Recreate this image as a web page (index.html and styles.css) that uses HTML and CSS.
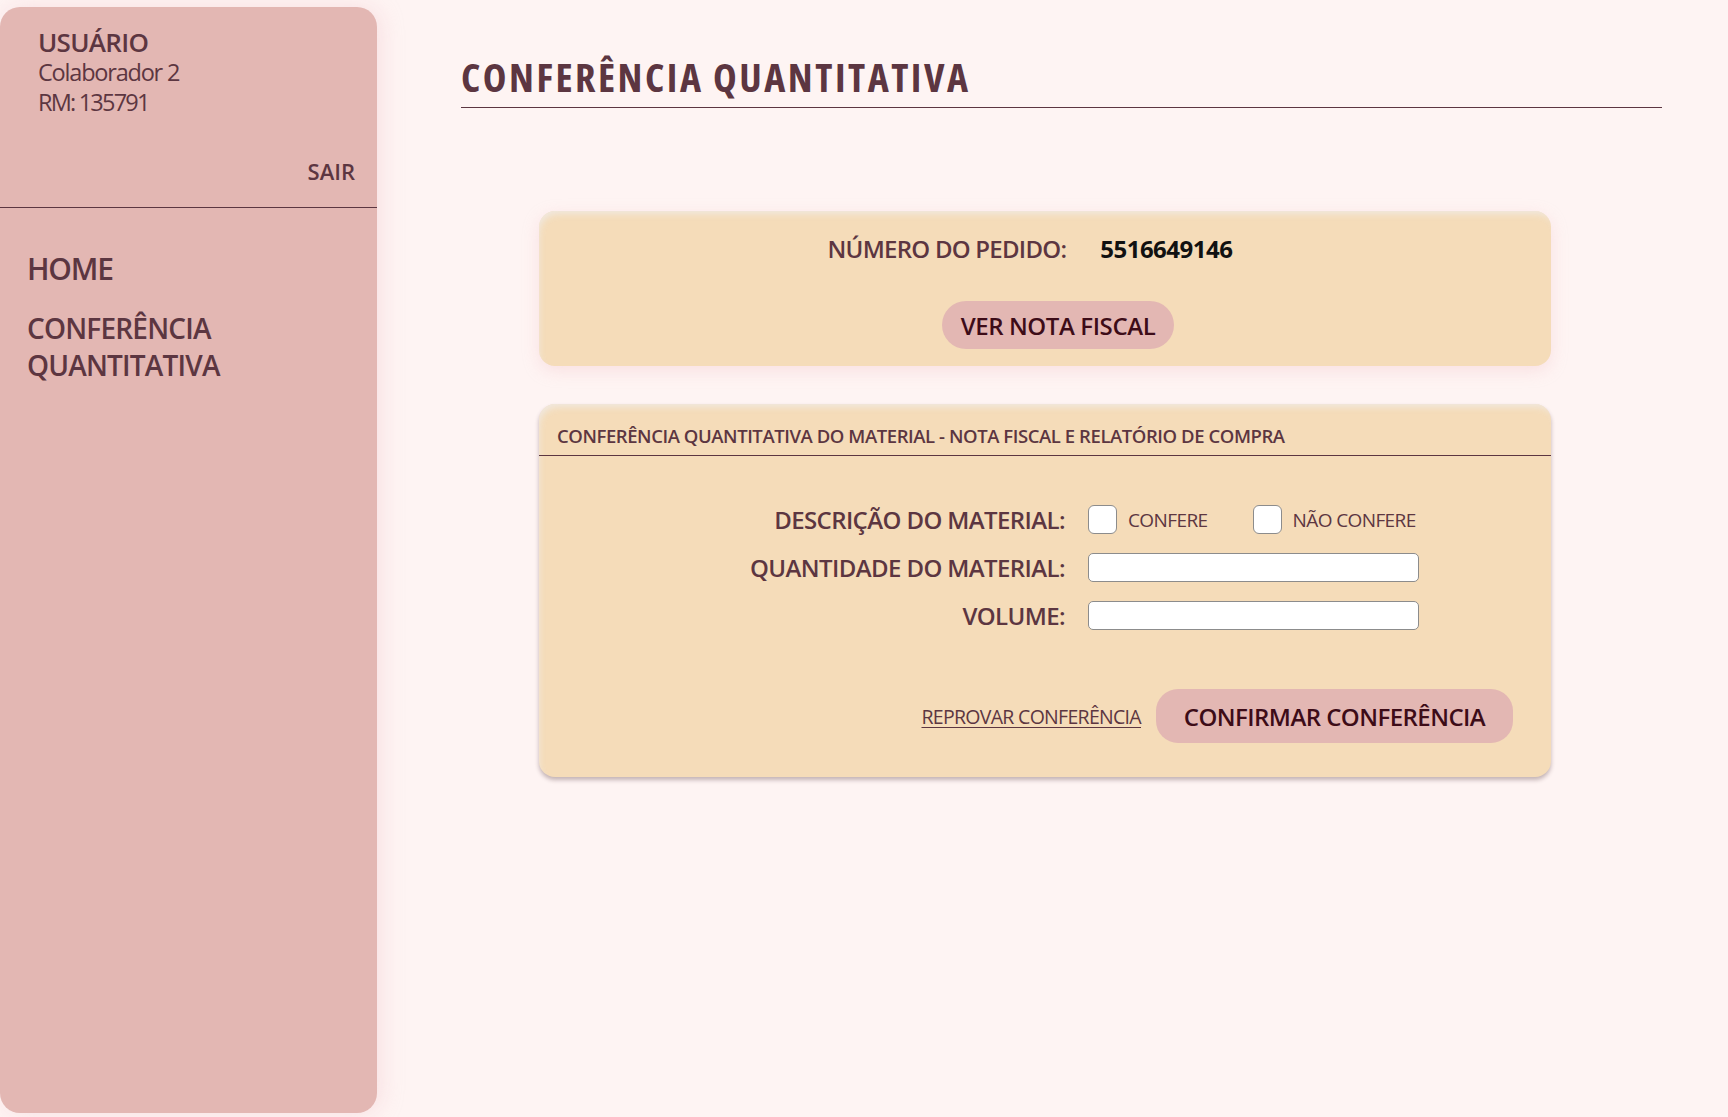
FILE: index.html
```html
<!DOCTYPE html>
<html lang="pt-BR">
<head>
<meta charset="utf-8">
<title>Conferência Quantitativa</title>
<link rel="stylesheet" href="styles.css">
</head>
<body>
<aside class="sidebar">
  <div class="user">
    <div class="user-title">USUÁRIO</div>
    <div class="user-line">Colaborador 2</div>
    <div class="user-line user-rm">RM: 135791</div>
    <div class="logout">SAIR</div>
  </div>
  <nav class="nav">
    <a class="nav-home" href="#">HOME</a>
    <a class="nav-item" href="#">CONFERÊNCIA<br>QUANTITATIVA</a>
  </nav>
</aside>
<main class="main">
  <h1 class="page-title">CONFERÊNCIA QUANTITATIVA</h1>
  <div class="cards">
    <section class="card card-order">
      <div class="order-row">
        <span class="order-label">NÚMERO DO PEDIDO:</span>
        <span class="order-number">5516649146</span>
      </div>
      <button class="btn btn-nf">VER NOTA FISCAL</button>
    </section>
    <section class="card card-check">
      <div class="check-header">CONFERÊNCIA QUANTITATIVA DO MATERIAL - NOTA FISCAL E RELATÓRIO DE COMPRA</div>
      <div class="form-grid">
        <div class="form-label">DESCRIÇÃO DO MATERIAL:</div>
        <div class="checks">
          <label class="check-opt"><input type="checkbox" class="check"><span>CONFERE</span></label>
          <label class="check-opt"><input type="checkbox" class="check"><span>NÃO CONFERE</span></label>
        </div>
        <div class="form-label">QUANTIDADE DO MATERIAL:</div>
        <input type="text" class="field">
        <div class="form-label">VOLUME:</div>
        <input type="text" class="field">
      </div>
      <div class="actions">
        <a class="reject" href="#">REPROVAR CONFERÊNCIA</a>
        <button class="btn btn-confirm">CONFIRMAR CONFERÊNCIA</button>
      </div>
    </section>
  </div>
</main>
</body>
</html>
```
FILE: styles.css
```css
* { box-sizing: border-box; }

html, body {
  margin: 0;
  padding: 0;
}

body {
  background: #fef4f3;
  color: #5c3641;
  font-family: "Open Sans", "Noto Sans", sans-serif;
  display: flex;
  align-items: flex-start;
  min-height: 1117px;
  overflow: hidden;
}

/* Sidebar */
.sidebar {
  width: 377px;
  height: 1106px;
  margin-top: 7px;
  flex: none;
  background: #e3b7b3;
  border-radius: 20px;
  box-shadow: 4px 0 22px rgba(238, 185, 195, 0.35);
  display: flex;
  flex-direction: column;
}

.user {
  padding: 19px 22px 21px 38px;
  border-bottom: 1px solid #5c3641;
}

.user-title {
  font-weight: 600;
  font-size: 26px;
  line-height: 32px;
  letter-spacing: -0.7px;
}

.user-line {
  font-size: 23.5px;
  line-height: 29px;
  letter-spacing: -1.2px;
}

.user-rm {
  margin-top: 1px;
  letter-spacing: -1.8px;
}

.logout {
  margin-top: 40px;
  text-align: right;
  font-weight: 600;
  font-size: 22px;
  line-height: 29px;
}

.nav {
  display: flex;
  flex-direction: column;
  gap: 23px;
  padding: 42px 20px 0 27px;
}

.nav a {
  color: #5c3641;
  text-decoration: none;
  font-weight: 600;
}

.nav-home {
  font-size: 30px;
  line-height: 37px;
  letter-spacing: -1.2px;
}

.nav-item {
  font-size: 28px;
  line-height: 37px;
  letter-spacing: -0.8px;
}

/* Main */
.main {
  flex: 1;
  padding: 0 66px 0 84px;
}

.page-title {
  margin: 54px 0 0;
  padding-bottom: 7px;
  font-size: 40px;
  line-height: 46px;
  font-weight: 700;
  font-stretch: 75%;
  letter-spacing: 2.5px;
  border-bottom: 1px solid #5c3641;
}

.cards {
  margin: 103px 0 0 78px;
  width: 1012px;
  display: flex;
  flex-direction: column;
  gap: 38px;
}

.card {
  background: #f5dcb9;
  border-radius: 16px;
}

.card-order {
  height: 155px;
  padding: 23px 0 17px;
  display: flex;
  flex-direction: column;
  align-items: center;
  box-shadow: inset 3px 6px 7px -3px rgba(240, 234, 228, 0.9), 0 5px 16px rgba(240, 190, 196, 0.35);
}

.order-row {
  display: flex;
  gap: 34px;
  padding-right: 30px;
  font-size: 24px;
  line-height: 30px;
  font-weight: 600;
}

.order-label {
  letter-spacing: -0.75px;
}

.order-number {
  color: #111;
  font-weight: 700;
  letter-spacing: -0.5px;
}

.btn {
  border: none;
  background: #e3b7b3;
  color: #3d0c18;
  font-family: inherit;
  font-weight: 600;
  white-space: nowrap;
  cursor: pointer;
}

.btn-nf {
  margin-top: 37px;
  margin-left: 26px;
  width: 232px;
  height: 48px;
  border-radius: 24px;
  font-size: 24px;
  letter-spacing: -0.4px;
  padding: 0;
}

.card-check {
  padding-bottom: 34px;
  box-shadow: inset 3px 6px 7px -3px rgba(240, 234, 228, 0.9), 0 3px 4px rgba(70, 45, 50, 0.32);
}

.check-header {
  padding: 21px 18px 8px;
  font-size: 18.5px;
  line-height: 22px;
  font-weight: 600;
  letter-spacing: -0.43px;
  border-bottom: 1px solid #5c3641;
}

.form-grid {
  display: grid;
  grid-template-columns: 526px 1fr;
  grid-auto-rows: 29px;
  column-gap: 23px;
  row-gap: 19px;
  align-items: center;
  padding-top: 49px;
}

.form-label {
  text-align: right;
  font-weight: 600;
  font-size: 24px;
  line-height: 29px;
  letter-spacing: -0.6px;
}

.checks {
  display: flex;
  align-items: center;
  gap: 45px;
}

.check-opt {
  display: flex;
  align-items: center;
  gap: 11px;
  font-size: 19px;
  letter-spacing: -0.6px;
}

.check {
  appearance: none;
  -webkit-appearance: none;
  margin: 0;
  width: 29px;
  height: 29px;
  background: #fff;
  border: 1px solid #8c8c8c;
  border-radius: 6px;
}

.field {
  width: 331px;
  height: 29px;
  margin: 0;
  background: #fff;
  border: 1px solid #8c8c8c;
  border-radius: 5px;
}

.actions {
  display: flex;
  justify-content: flex-end;
  align-items: center;
  gap: 15px;
  margin-top: 59px;
  padding-right: 38px;
}

.reject {
  color: #5c3641;
  font-size: 19.5px;
  letter-spacing: -0.7px;
  text-decoration: underline;
  text-underline-offset: 3px;
  text-decoration-thickness: 1px;
}

.btn-confirm {
  width: 357px;
  height: 54px;
  border-radius: 22px;
  font-size: 24px;
  letter-spacing: -0.55px;
  padding: 0;
}
```
